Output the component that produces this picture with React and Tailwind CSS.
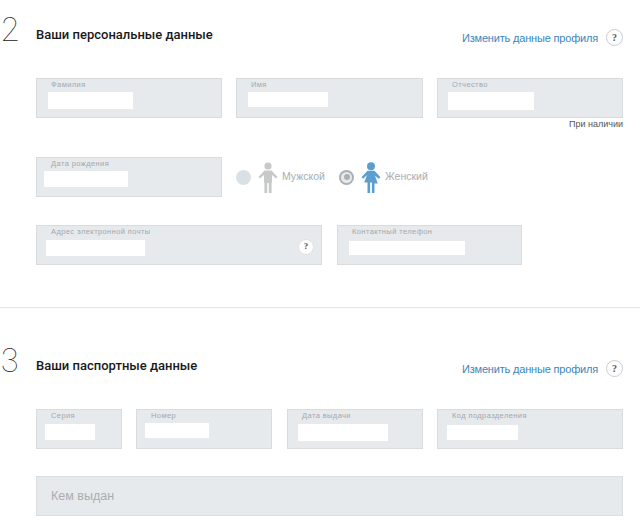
import React from 'react'

const sans = 'font-["Liberation_Sans",Arial,sans-serif]'

function Field({ label, className, labelMl, inputMl, inputW, inputH, inputMt, children }) {
  return (
    <div className={`relative h-10 border border-[#d9dcde] bg-[#e7eaed] ${className}`}>
      <div className={`h-[13px] pt-[1px] ${sans} text-[7.5px] leading-[10px] tracking-[0.4px] text-[#a3a7aa] ${labelMl}`}>
        {label}
      </div>
      <div className={`bg-white ${inputMl} ${inputW} ${inputH} ${inputMt}`} />
      {children}
    </div>
  )
}

function HelpIcon({ small }) {
  return (
    <div
      className={`flex shrink-0 items-center justify-center rounded-full bg-white font-["Liberation_Serif",serif] font-bold text-[#555] ${
        small
          ? 'h-4 w-4 border border-[#dfe1e3] text-[9px]'
          : 'h-[17px] w-[17px] border border-[#c9cccf] text-[10px]'
      }`}
    >
      ?
    </div>
  )
}

function SectionHeader({ num, title, className }) {
  return (
    <div className={`flex items-start ${className}`}>
      <div className='w-9 font-["Inter",sans-serif] text-[33px] font-thin leading-[40px] text-[#222]'>{num}</div>
      <div className='mt-[17px] font-["Roboto",sans-serif] text-[13px] font-medium leading-[18px] text-[#1a1a1a]'>{title}</div>
      <div className="mt-[20px] ml-auto flex items-center">
        <span className={`${sans} text-[11px] leading-[16px] tracking-[-0.18px] text-[#3a86bb]`}>Изменить данные профиля</span>
        <div className="ml-2">
          <HelpIcon />
        </div>
      </div>
    </div>
  )
}

function Radio({ checked }) {
  return (
    <div
      className={`flex h-[15px] w-[15px] items-center justify-center rounded-full ${
        checked ? 'bg-[#a9afb3]' : 'bg-[#d9e1e7]'
      }`}
    >
      {checked && (
        <div className="flex h-[11px] w-[11px] items-center justify-center rounded-full bg-[#e7eaed]">
          <div className="h-[6px] w-[6px] rounded-full bg-[#a9afb3]" />
        </div>
      )}
    </div>
  )
}

function ManIcon() {
  return (
    <svg width="20" height="31" viewBox="0 0 20 31" fill="#c8c9c9">
      <circle cx="10" cy="4" r="3.6" />
      <path d="M6.5 8.5h7L19.5 15l-1.6 1.6L14 13v7.5h-.4V31h-2.8V21h-1.6v10H6.400V20.500H6V13l-3.900 3.600L.5 15z" />
    </svg>
  )
}

function WomanIcon() {
  return (
    <svg width="20" height="31" viewBox="0 0 20 31" fill="#5a9fd0">
      <circle cx="10" cy="4.200" r="4" />
      <path d="M6.500 8.800h7l6 6.400-1.700 1.600-3.800-3 2.800 7.700H13.500V31h-2.600V20.500H9.100V31H6.500V20.500H3.200L6 13l-3.800 3.800L.5 15.200z" />
    </svg>
  )
}

export default function App() {
  return (
    <div className="h-[528px] w-[640px] overflow-hidden bg-white">
      <div className="pr-[17px]">
        <SectionHeader num="2" title="Ваши персональные данные" className="h-[78px] pt-[9px]" />

        <div className="ml-9 flex gap-[14px]">
          <Field label="Фамилия" className="w-[186px]" labelMl="ml-[14px]" inputMl="ml-[11px]" inputW="w-[85px]" inputH="h-[17px]" />
          <Field label="Имя" className="w-[187px]" labelMl="ml-[14px]" inputMl="ml-[11px]" inputW="w-[80px]" inputH="h-[15px]" />
          <Field label="Отчество" className="w-[186px]" labelMl="ml-[14px]" inputMl="ml-[10px]" inputW="w-[86px]" inputH="h-[18px]" />
        </div>
        <div className={`${sans} h-[39px] pt-[1px] text-right text-[9px] leading-[11px] text-[#555]`}>При наличии</div>

        <div className="ml-9 flex items-center">
          <Field label="Дата рождения" className="w-[186px]" labelMl="ml-[14px]" inputMl="ml-[7px]" inputW="w-[84px]" inputH="h-[16px]" />
          <div className="ml-[14px] flex items-center">
            <Radio />
            <div className="ml-[7px]">
              <ManIcon />
            </div>
            <span className={`${sans} ml-[4px] w-[43px] whitespace-nowrap text-[10.5px] text-[#a9adb1]`}>Мужской</span>
          </div>
          <div className="ml-[14px] flex items-center">
            <Radio checked />
            <div className="ml-[7px]">
              <WomanIcon />
            </div>
            <span className={`${sans} ml-[4px] whitespace-nowrap text-[10.5px] text-[#a9adb1]`}>Женский</span>
          </div>
        </div>

        <div className="mt-[28px] ml-9 flex gap-[15px]">
          <Field label="Адрес электронной почты" className="w-[286px]" labelMl="ml-[14px]" inputMl="ml-[9px]" inputW="w-[99px]" inputH="h-[16px]" inputMt="mt-[1px]">
            <div className="absolute top-[13px] right-[7px]">
              <HelpIcon small />
            </div>
          </Field>
          <Field label="Контактный телефон" className="w-[185px]" labelMl="ml-[14px]" inputMl="ml-[11px]" inputW="w-[116px]" inputH="h-[14px]" inputMt="mt-[2px]" />
        </div>
      </div>

      <div className="mt-[42px] h-px bg-[#e3e5e6]" />

      <div className="pr-[17px]">
        <SectionHeader num="3" title="Ваши паспортные данные" className="h-[101px] pt-[32px]" />

        <div className="ml-9 flex">
          <Field label="Серия" className="w-[86px]" labelMl="ml-[14px]" inputMl="ml-[8px]" inputW="w-[50px]" inputH="h-[16px]" inputMt="mt-[1px]" />
          <Field label="Номер" className="ml-[14px] w-[136px]" labelMl="ml-[14px]" inputMl="ml-[8px]" inputW="w-[64px]" inputH="h-[15px]" />
          <Field label="Дата выдачи" className="ml-[15px] w-[136px]" labelMl="ml-[14px]" inputMl="ml-[10px]" inputW="w-[90px]" inputH="h-[17px]" inputMt="mt-[1px]" />
          <Field label="Код подразделения" className="ml-[14px] w-[186px]" labelMl="ml-[14px]" inputMl="ml-[9px]" inputW="w-[71px]" inputH="h-[15px]" inputMt="mt-[2px]" />
        </div>

        <div className={`${sans} mt-[27px] ml-9 flex h-10 items-center border border-[#dcdfe1] bg-[#e7eaed] pl-[14px] text-[12.5px] text-[#a9adb1]`}>
          Кем выдан
        </div>
      </div>
    </div>
  )
}
